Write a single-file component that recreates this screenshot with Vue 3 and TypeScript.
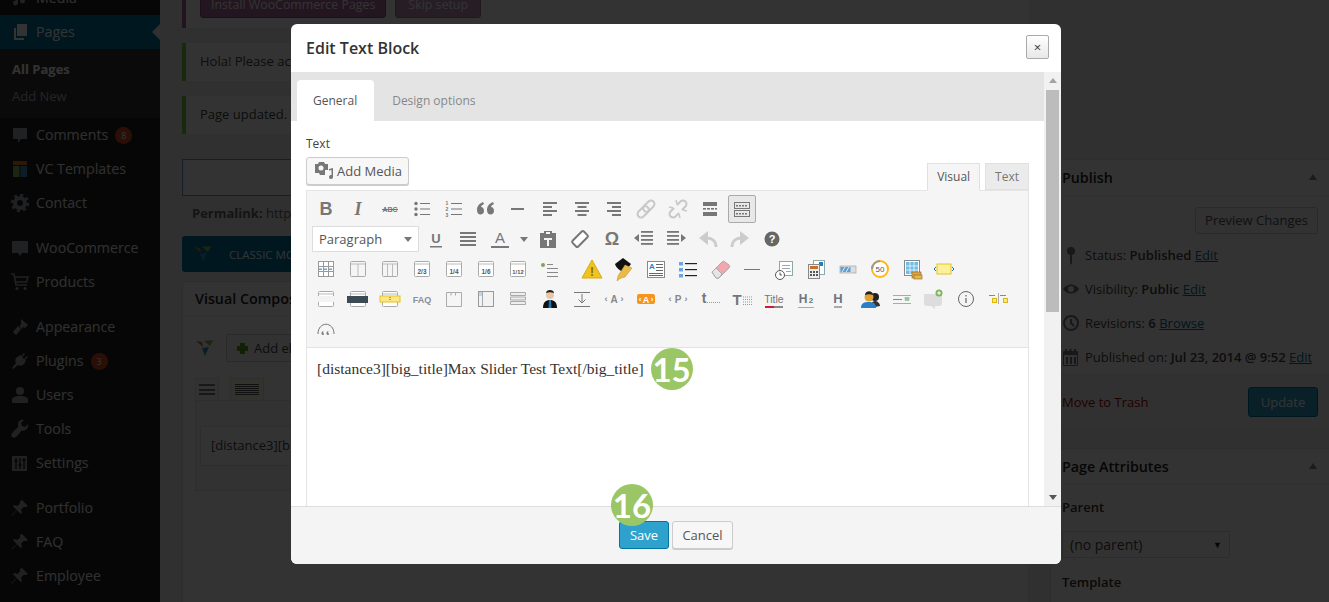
<script setup lang="ts">
const g = "#777";
const font = 'font-family="Liberation Sans, sans-serif"';
const txt = (s: string, size: number, y = 17, extra = "", fill = g, x = 12) =>
  `<text x="${x}" y="${y}" text-anchor="middle" font-size="${size}" ${font} fill="${fill}" ${extra}>${s}</text>`;
const bold = 'font-weight="700"';
const bars = (rows: number[][], c = g, h = 2) =>
  rows.map(([x, y, w]) => `<rect x="${x}" y="${y}" width="${w}" height="${h}" fill="${c}"/>`).join("");
const frame = (inner = "", fill = "#fff") =>
  `<rect x="4.5" y="4.5" width="15" height="15" rx="1" fill="${fill}" stroke="#aaa"/><path d="M5 7h14" stroke="#bbb"/>${inner}`;
const frac = (s: string, size = 6.5) => frame(txt(s, size, 16.5, bold, "#555"));
const line = (d: string, c = "#888", w = 1, extra = "") =>
  `<path d="${d}" fill="none" stroke="${c}" stroke-width="${w}" ${extra}/>`;

const row1 = [
  txt("B", 18, 18, bold),
  `<text x="12" y="18" text-anchor="middle" font-size="18" font-family="Liberation Serif, serif" font-style="italic" font-weight="700" fill="${g}">I</text>`,
  txt("ABC", 7, 15, bold) + bars([[4, 12, 16]], g, 1),
  `<circle cx="6" cy="6.5" r="1.7" fill="${g}"/><circle cx="6" cy="12" r="1.7" fill="${g}"/><circle cx="6" cy="17.5" r="1.7" fill="${g}"/>` +
    bars([[10, 6, 10], [10, 11.5, 10], [10, 17, 10]], g, 1),
  txt("1", 5, 8, bold, g, 5) + txt("2", 5, 14, bold, g, 5) + txt("3", 5, 20, bold, g, 5) +
    bars([[9, 6, 11], [9, 11.5, 11], [9, 17, 11]], g, 1),
  `<path d="M3 13c0-4 2-6 6-8l1 2c-2 1-3 2-3 3 2 0 3 2 3 4s-1.500 3.500-3.500 3.500S3 16 3 13zM13 13c0-4 2-6 6-8l1 2c-2 1-3 2-3 3 2 0 3 2 3 4s-1.500 3.500-3.500 3.500S13 16 13 13z" fill="${g}"/>`,
  bars([[5, 11, 13]]),
  bars([[5, 5, 14], [5, 9, 9], [5, 13, 14], [5, 17, 9]]),
  bars([[5, 5, 14], [7.5, 9, 9], [5, 13, 14], [7.5, 17, 9]]),
  bars([[5, 5, 14], [10, 9, 9], [5, 13, 14], [10, 17, 9]]),
  `<g transform="rotate(-45 12 12)" fill="none" stroke="#c8c8c8" stroke-width="2"><rect x="1.5" y="8.5" width="13" height="7" rx="3.5"/><rect x="9.5" y="8.5" width="13" height="7" rx="3.5"/></g>`,
  `<g transform="rotate(-45 12 12)" fill="none" stroke="#c8c8c8" stroke-width="2"><path d="M10 8.500H5a3.500 3.500 0 0 0 0 7h5"/><path d="M14 8.500h5a3.500 3.500 0 0 1 0 7h-5"/></g>` +
    line("M10 3l1 4M14 21l-1-4M3 10l4 1M21 14l-4-1", "#c8c8c8", 1.5),
  bars([[5, 5, 14]], g, 4) + bars([[5, 11, 3], [9, 11, 3], [13, 11, 3], [17, 11, 2]], g, 1.6) + bars([[5, 15, 14]], g, 4),
  `<rect x="4.5" y="5.5" width="15" height="6" fill="none" stroke="#777"/><rect x="4.5" y="13.5" width="15" height="6" fill="none" stroke="#777"/>` +
    bars([[6, 8, 2], [9, 8, 2], [12, 8, 2], [15, 8, 2], [6, 16, 2], [9, 16, 2], [12, 16, 2], [15, 16, 2]], g, 1.5),
];

const row2 = [
  txt("U", 13, 16, bold) + bars([[6, 19, 12]], g, 1.5),
  bars([[4, 5, 16], [4, 9, 16], [4, 13, 16], [4, 17, 16]]),
  txt("A", 15, 16) + bars([[3, 19, 18]], g, 2),
];
const row2b = [
  `<path d="M4 6h4V4h8v2h4v15H4z" fill="${g}"/><path d="M8 11h8v2h-3v6h-2v-6H8z" fill="#f5f5f5"/><rect x="10" y="5" width="4" height="2" fill="#f5f5f5"/>`,
  `<g transform="rotate(-45 12 12)"><rect x="4" y="8" width="16" height="8" rx="1.500" fill="#fff" stroke="${g}" stroke-width="2"/></g>`,
  txt("Ω", 18, 18, bold),
  `<path d="M2 11l5-4v8z" fill="${g}"/>` + bars([[9, 4, 12], [9, 8, 12], [9, 12, 12], [9, 16, 12]], g, 1.8),
  `<path d="M22 11l-5-4v8z" fill="${g}"/>` + bars([[3, 4, 12], [3, 8, 12], [3, 12, 12], [3, 16, 12]], g, 1.8),
  line("M20 20c0-6-4-9-9-9", "#ccc", 3) + `<path d="M12 4v14L3 11z" fill="#ccc"/>`,
  line("M4 20c0-6 4-9 9-9", "#ccc", 3) + `<path d="M12 4v14l9-7z" fill="#ccc"/>`,
  `<circle cx="12" cy="12" r="7.5" fill="#666"/>` + txt("?", 11, 16, bold, "#fff"),
];

const row3 = [
  `<rect x="4.5" y="4.5" width="15" height="15" fill="#fff" stroke="#999"/>` +
    line("M9.500 4v15M14.500 4v15M4 9.500h15M4 14.500h15", "#999") +
    bars([[5, 11.5, 3], [10, 11.5, 3], [15, 11.5, 3]], "#5aa9e6", 1.5),
  frame(line("M12 7v12", "#bbb"), "#f5f5f5"),
  frame(line("M9.500 7v12M14.500 7v12", "#bbb"), "#f5f5f5"),
  frac("2/3"),
  frac("1/4"),
  frac("1/6"),
  frac("1/12", 5.8),
  `<circle cx="5" cy="8" r="2" fill="#7fa65a"/>` + bars([[9, 7, 6], [9, 11, 11], [9, 15, 11], [9, 19, 11]], "#888", 1),
];
const row3b = [
  `<path d="M12 3l10 18H2z" fill="#f0c420" stroke="#d9a90f"/>` + txt("!", 12, 19, bold, "#8a6d00"),
  `<path d="M3 7l8-6 8 6-6 8c-4 0-9-4-10-8z" fill="#111"/><path d="M13 8l7 3-7 9-4 1-4 3 1-5z" fill="#e9b949" stroke="#c9982f" stroke-width=".6"/>`,
  `<rect x="3.5" y="4.5" width="17" height="16" fill="#fff" stroke="#888"/>` + txt("A", 8, 12, bold, "#2f7fd0", 8) +
    bars([[12, 7, 7], [12, 10, 7], [12, 13, 7], [5, 16, 14], [5, 18, 14]], "#666", 1),
  `<rect x="3" y="5" width="4" height="3.5" fill="#6aa5e0"/><rect x="3" y="11" width="4" height="3.5" fill="#6aa5e0"/><rect x="3" y="17" width="4" height="3.5" fill="#6aa5e0"/>` +
    bars([[9, 6, 12], [9, 12, 12], [9, 18, 12]], "#222", 1.2),
  `<path d="M4 15L14 5c1-1 2-1 3 0l4 3c1 1 1 2 0 3L11 21H8z" fill="#f2a6ae" stroke="#aaa"/><path d="M4 15l4-4 6 6-3 4H8z" fill="#e5e5e5" stroke="#aaa"/>`,
  bars([[4, 12, 16]], "#777", 1),
  `<rect x="7.5" y="4.5" width="13" height="14" fill="#fff" stroke="#8aa"/>` + bars([[10, 8, 8], [10, 11, 8], [14, 14, 5]], "#9ab", 1) +
    `<circle cx="8" cy="18" r="4.5" fill="#fff" stroke="#555"/>` + line("M8 15.500V18h2", "#555"),
  `<rect x="9.5" y="3.5" width="11" height="14" fill="#fff" stroke="#8aa"/><rect x="15" y="5" width="4" height="4" fill="#2d78b8"/><rect x="4.5" y="7.5" width="11" height="14" fill="#eee" stroke="#888"/><rect x="6" y="9" width="8" height="3" fill="#c96f2e"/>` +
    bars([[6, 14, 2], [9, 14, 2], [12, 14, 2], [6, 17, 2], [9, 17, 2], [12, 17, 2]], "#555", 2),
  `<rect x="4" y="9" width="16" height="7" fill="#ddd" stroke="#999" stroke-width=".6"/><rect x="4.5" y="10" width="10" height="5" fill="#5aa0d8"/>` +
    line("M6 15l3-5M10 15l3-5", "#fff", 0.8),
  `<circle cx="12" cy="12" r="8" fill="#fff" stroke="#fdb913" stroke-width="2"/>` + line("M12 4A8 8 0 0 0 4 12", "#999", 2) + txt("50", 8, 15, "", "#555"),
  `<rect x="4.5" y="3.5" width="15" height="15" fill="#fff" stroke="#888"/><rect x="6" y="5" width="12" height="12" fill="#6dbdea"/>` +
    line("M6 9h12M6 13h12M10 5v12M14 5v12", "#fff", 0.7) +
    `<rect x="12" y="15" width="9" height="6" fill="#d9a441" stroke="#8a6a20" stroke-width=".6"/><rect x="14" y="18" width="8" height="4" fill="#e6b451" stroke="#8a6a20" stroke-width=".6"/>`,
  `<rect x="5" y="7" width="14" height="10" fill="#fdf09c" stroke="#e6c619"/><path d="M4 10l-2 2 2 2M20 10l2 2-2 2" fill="none" stroke="#1a6fa8"/>`,
];

const row4 = [
  frame(`<rect x="3" y="9" width="18" height="6" fill="#f3f3f3"/>`),
  frame(`<rect x="1" y="9" width="21" height="7" fill="#3c4a54"/>`),
  frame(`<rect x="2" y="9" width="20" height="6" fill="#fde68a" stroke="#e6c619"/><path d="M12 10v4" stroke="#555" stroke-dasharray="1 1"/>`),
  txt("FAQ", 9, 16, bold, "#8a8f98"),
  `<path d="M4.500 5.500h15v14h-15z" fill="#f5f5f5" stroke="#aaa"/><path d="M9 5.500v3M13.500 5.500v3" stroke="#aaa"/>`,
  `<rect x="4.5" y="4.5" width="15" height="15" fill="#f2f2f2" stroke="#999"/><rect x="5" y="5" width="3" height="4" fill="#b8d8ee"/>` + line("M8.500 5v14", "#aaa"),
  `<path d="M4.500 5.500h15v3h-15zM4.500 10h15v3h-15zM4.500 14.500h15v3h-15z" fill="#eee" stroke="#aaa"/>`,
  `<circle cx="12" cy="8" r="4" fill="#e9c7a5"/><path d="M8 6c0-4 8-4 8 0-3-1-5-1-8 0z" fill="#222"/><path d="M5 21c0-6 3-8 7-8s7 2 7 8z" fill="#111"/><path d="M11 13h2l.5 8h-3z" fill="#1878b8"/>`,
  line("M4 5.500h16M4 19.500h16", "#777") + line("M12 7v9M8.500 12.500L12 16l3.500-3.500", "#777"),
  txt("‹", 9, 15, bold, "#888", 4) + txt("A", 10, 16, bold, "#888") + txt("›", 9, 15, bold, "#888", 20),
  `<rect x="3" y="7" width="18" height="10" rx="2" fill="#f7941d"/>` + txt("‹", 8, 15, bold, "#fff", 6) + txt("A", 9, 15.5, bold, "#fff") + txt("›", 8, 15, bold, "#fff", 18),
  txt("‹", 9, 15, bold, "#888", 4) + txt("P", 10, 16, bold, "#888") + txt("›", 9, 15, bold, "#888", 20),
  txt("t", 14, 16, bold, "#777", 6) + line("M9 15.500h13", "#999", 1, 'stroke-dasharray="1 1"'),
  txt("T", 15, 18, bold, "#777", 7) + line("M13 10h9M13 12.500h9M13 15h9M13 17.500h9", "#999", 1, 'stroke-dasharray="1 1"'),
  txt("Title", 10.5, 16, "", "#777") + `<rect x="3" y="19" width="9" height="2" fill="#d9152f"/><rect x="12" y="19" width="9" height="2" fill="#888"/>`,
  txt("H", 12, 16, bold, "#6f7580", 9) + txt("2", 8, 16, bold, "#6f7580", 17) + bars([[4, 20, 16]], "#aaa", 1),
  txt("H", 13, 16, bold, "#6f7580") + bars([[8, 19, 8]], "#aaa", 2),
  `<circle cx="17" cy="10" r="4" fill="#222"/><path d="M12 21c0-5 3-7 5-7s5 2 5 5z" fill="#333"/><circle cx="11" cy="10" r="4.5" fill="#e0a030"/><path d="M7 8c0-5 8-5 8 0-3-1-5-1-8 0z" fill="#222"/><path d="M3 21c0-5 3-6 8-6s7 2 7 6z" fill="#2b7fc4"/>`,
  bars([[3, 8, 18]], "#aaa", 1) + bars([[3, 12, 9]], "#888", 1) + `<rect x="15" y="10.5" width="4" height="3" fill="#8fd19e" stroke="#6a6" stroke-width=".4"/>` + bars([[3, 16, 18]], "#aaa", 1),
  `<path d="M2 7h15c2 0 3 1 3 3v6c0 2-1 3-3 3h-4v3l-4-3H5c-2 0-3-1-3-3z" fill="#ddd"/><circle cx="17" cy="6" r="3.5" fill="#7fb35f"/><path d="M17 4v4M15 6h4" stroke="#fff"/>`,
  `<circle cx="12" cy="12" r="7.5" fill="none" stroke="#666"/><path d="M12 11v5M12 8v1.500" stroke="#666" stroke-width="1.2"/>`,
  bars([[3, 8, 6], [14, 8, 6]], "#888", 1) + `<rect x="6.5" y="11.5" width="4" height="4" fill="#fde68a" stroke="#d9b70f"/><rect x="17.5" y="11.5" width="4" height="4" fill="#fde68a" stroke="#d9b70f"/><path d="M12.500 6v11" stroke="#aaa"/>`,
];
const row5 = [
  line("M4 17c0-13 16-13 16 0", "#777") +
    `<path d="M9 18c-2 0-2-3 0-4l.5.7c-.5.4-.7.7-.7 1 1.500 0 1.500 2.300.2 2.300zM14 18c-2 0-2-3 0-4l.5.7c-.5.4-.7.7-.7 1 1.500 0 1.500 2.300.2 2.300z" fill="#777"/>`,
];

const c = "#9ea3a8";
const pin = `<path d="M12 2l6 6-2 1h-2.500L11 11.500l1 3.500-1.200 1-3.800-3.800L2 17.500l-.5-.5 5.300-5L3 8.200 4 7l3.500 1L10 5.500V3z" fill="${c}"/>`;
type MenuItem = { label: string; icon: string; badge?: string };
const menuGroups: MenuItem[][] = [
  [
    { label: "Comments", badge: "8", icon: `<path d="M3 3h14v11h-6l-3 4v-4H3z" fill="${c}"/>` },
    { label: "VC Templates", icon: `<rect x="3" y="2" width="14" height="4" fill="#e07b20"/><rect x="3" y="7" width="6.5" height="11" fill="#8cb84a"/><rect x="10.5" y="7" width="6.5" height="11" fill="#3c8fc4"/>` },
    { label: "Contact", icon: `<circle cx="10" cy="10" r="5" fill="none" stroke="${c}" stroke-width="4"/><circle cx="10" cy="10" r="8" fill="none" stroke="${c}" stroke-width="2.5" stroke-dasharray="3 3.28"/>` },
  ],
  [
    { label: "WooCommerce", icon: `<path d="M2 3h16v12h-6l-2 3-2-3H2z" fill="${c}"/>` },
    { label: "Products", icon: `<path d="M1 2h3l2 11h11M5 5h13l-1.500 5H6" fill="none" stroke="${c}" stroke-width="1.5"/><circle cx="7" cy="16.5" r="1.5" fill="${c}"/><circle cx="15" cy="16.5" r="1.5" fill="${c}"/>` },
  ],
  [
    { label: "Appearance", icon: `<path d="M11 2l7 6-3 3-2-1-1 2-3-3 2-1zM8 9l3 3-5 6-3-3z" fill="${c}"/>` },
    { label: "Plugins", badge: "3", icon: `<path d="M14 2l1 1-3 3 2 2 3-3 1 1-3 3 1 1-3 4c-2 1-4 1-5 0l-5 4-1-1 4-5c-1-1-1-3 0-5l4-3 1 1z" fill="${c}"/>` },
    { label: "Users", icon: `<circle cx="10" cy="6" r="4" fill="${c}"/><path d="M2 18v-3c0-3 3-4 8-4s8 1 8 4v3z" fill="${c}"/>` },
    { label: "Tools", icon: `<path d="M18 5l-3 3-3-1-1-3 3-3c-3-1-6 1-6 4 0 1 0 2 .5 2.500L2 14c-1 1-1 3 0 4s3 1 4 0l6-6.500c3 1 7-2 6-6.500z" fill="${c}"/>` },
    { label: "Settings", icon: `<rect x="2" y="3" width="15" height="15" fill="${c}"/><path d="M6 5v11M10 5v11M14 5v11" stroke="#222" stroke-width="1.5"/><path d="M4.500 8h3M8.500 12h3M12.500 7h3" stroke="#222" stroke-width="2"/>` },
  ],
  [
    { label: "Portfolio", icon: pin },
    { label: "FAQ", icon: pin },
    { label: "Employee", icon: pin },
  ],
];

const a = "#777";
const metaIcons = {
  status: `<circle cx="9" cy="6" r="4" fill="${a}"/><path d="M8 9h2v9l-1 2-1-2z" fill="${a}"/>`,
  visibility: `<path d="M1 10c4-6 12-6 16 0-4 6-12 6-16 0z" fill="${a}"/><circle cx="9" cy="10" r="3" fill="#fff"/>`,
  revisions: `<circle cx="9" cy="10" r="7" fill="none" stroke="${a}" stroke-width="2"/><path d="M9 6v4l3 3" fill="none" stroke="${a}" stroke-width="2"/>`,
  calendar: `<path d="M1.500 4.500h14v14h-14z" fill="none" stroke="${a}"/><path d="M2 4h13v4H2zM4 10h2v7H4zM8 10h2v7H8zM12 10h2v7h-2z" fill="${a}"/><path d="M4 2v3M8.500 2v3M13 2v3" stroke="${a}" stroke-width="2"/>`,
};
</script>

<template>
  <div class="page">
    <div class="scrolled">
      <aside class="sidebar">
        <div class="menu-item media">
          <svg class="menu-icon" viewBox="0 0 20 20"><path d="M6 4l9-2v11a2.500 2.500 0 1 1-2-2.400V5L8 6v9a2.500 2.500 0 1 1-2-2.400z" fill="#9ea3a8" /></svg>
          <span>Media</span>
        </div>
        <div class="menu-item current">
          <svg class="menu-icon" viewBox="0 0 20 20"><path d="M7 2h10v12H7z" fill="#fff" /><path d="M4 6v12h10v-2H6V6z" fill="#fff" /></svg>
          <span>Pages</span>
        </div>
        <div class="submenu">
          <div class="sub strong">All Pages</div>
          <div class="sub">Add New</div>
        </div>
        <div v-for="(group, i) in menuGroups" :key="i" class="menu-group">
          <div v-for="item in group" :key="item.label" class="menu-item">
            <svg class="menu-icon" viewBox="0 0 20 20" v-html="item.icon"></svg>
            <span>{{ item.label }}</span>
            <b v-if="item.badge" class="badge">{{ item.badge }}</b>
          </div>
        </div>
      </aside>

      <main class="main">
        <section class="content">
          <div class="notice purple">
            <button class="woo-btn">Install WooCommerce Pages</button>
            <button class="woo-btn faint">Skip setup</button>
          </div>
          <div class="notice">Hola! Please act</div>
          <div class="notice">Page updated. V</div>
          <div class="title-input"></div>
          <div class="permalink"><b>Permalink:</b> http://</div>
          <div class="classic">
            <svg width="20" height="20" viewBox="0 0 20 20"><path d="M1 3l6 1 1 5z" fill="#c77a2a" /><path d="M9 3l9-1-3 6z" fill="#8cb84a" /><path d="M7 10l7-1-4 9z" fill="#2f94c4" /></svg>
            <span>CLASSIC MODE</span>
          </div>
          <div class="vc-box">
            <h3 class="box-title">Visual Composer</h3>
            <div class="vc-inner">
              <div class="vc-tools">
                <svg width="20" height="20" viewBox="0 0 20 20"><path d="M1 3l6 1 1 5z" fill="#c77a2a" /><path d="M9 3l9-1-3 6z" fill="#8cb84a" /><path d="M7 10l7-1-4 9z" fill="#2f94c4" /></svg>
                <div class="add-element"><i class="plus"></i>Add element</div>
              </div>
              <div class="vc-tabs">
                <span class="vc-tab"><i class="lines"></i></span>
                <span class="vc-tab yellow"><i class="lines dense"></i></span>
              </div>
              <div class="vc-row">
                <div class="vc-card">[distance3][big_title]Max Slider Test Text[/big_title]</div>
              </div>
            </div>
          </div>
        </section>

        <section class="side">
          <div class="side-box">
            <h3 class="box-title">Publish<i class="caret"></i></h3>
            <div class="preview-row"><span class="btn">Preview Changes</span></div>
            <div class="meta"><svg viewBox="0 0 18 20" v-html="metaIcons.status"></svg><span>Status: <b>Published</b> <u>Edit</u></span></div>
            <div class="meta"><svg viewBox="0 0 18 20" v-html="metaIcons.visibility"></svg><span>Visibility: <b>Public</b> <u>Edit</u></span></div>
            <div class="meta"><svg viewBox="0 0 18 20" v-html="metaIcons.revisions"></svg><span>Revisions: <b>6</b> <u>Browse</u></span></div>
            <div class="meta"><svg viewBox="0 0 18 20" v-html="metaIcons.calendar"></svg><span>Published on: <b>Jul 23, 2014 @ 9:52</b> <u>Edit</u></span></div>
            <div class="actions">
              <span class="trash">Move to Trash</span>
              <span class="update">Update</span>
            </div>
          </div>
          <div class="side-box attrs">
            <h3 class="box-title">Page Attributes<i class="caret"></i></h3>
            <div class="attr-label first">Parent</div>
            <div class="parent-select">(no parent)<i>▼</i></div>
            <div class="attr-label">Template</div>
          </div>
        </section>
      </main>
    </div>

    <div class="overlay">
      <div class="modal">
        <header class="modal-head">
          <h2>Edit Text Block</h2>
          <button class="close">×</button>
        </header>

        <div class="modal-body">
          <div class="scroll-area">
            <nav class="tabs">
              <span class="tab active">General</span>
              <span class="tab">Design options</span>
            </nav>
            <div class="form">
              <div class="field-label">Text</div>
              <div class="editor-top">
                <button class="add-media">
                  <svg width="20" height="20" viewBox="0 0 20 20"><path d="M1 3h3l1-2h5l1 2h3v6h-3v5H6l-1-2H1z" fill="#777" /><circle cx="7" cy="7" r="2.5" fill="#f7f7f7" /><path d="M15 8l4-1v9a2 2 0 1 1-1.500-1.900V9l-2.500.6z" fill="#777" /></svg>
                  Add Media
                </button>
                <div class="mode-tabs">
                  <span class="mode active">Visual</span>
                  <span class="mode">Text</span>
                </div>
              </div>
              <div class="editor">
                <div class="toolbar">
                  <div class="tb-row">
                    <span v-for="(svg, i) in row1" :key="i" class="tb-btn" :class="{ pressed: i === row1.length - 1 }">
                      <svg viewBox="0 0 24 24" v-html="svg"></svg>
                    </span>
                  </div>
                  <div class="tb-row">
                    <div class="format-select">Paragraph<i></i></div>
                    <span v-for="(svg, i) in row2" :key="i" class="tb-btn"><svg viewBox="0 0 24 24" v-html="svg"></svg></span>
                    <i class="split-arrow"></i>
                    <span v-for="(svg, i) in row2b" :key="i" class="tb-btn"><svg viewBox="0 0 24 24" v-html="svg"></svg></span>
                  </div>
                  <div class="tb-row">
                    <span v-for="(svg, i) in row3" :key="i" class="tb-btn"><svg viewBox="0 0 24 24" v-html="svg"></svg></span>
                    <span class="tb-gap"></span>
                    <span v-for="(svg, i) in row3b" :key="i" class="tb-btn"><svg viewBox="0 0 24 24" v-html="svg"></svg></span>
                  </div>
                  <div class="tb-row">
                    <span v-for="(svg, i) in row4" :key="i" class="tb-btn"><svg viewBox="0 0 24 24" v-html="svg"></svg></span>
                  </div>
                  <div class="tb-row">
                    <span v-for="(svg, i) in row5" :key="i" class="tb-btn"><svg viewBox="0 0 24 24" v-html="svg"></svg></span>
                  </div>
                </div>
                <div class="editor-text">
                  <span>[distance3][big_title]Max Slider Test Text[/big_title]</span>
                  <span class="step">15</span>
                </div>
              </div>
            </div>
          </div>
          <div class="scrollbar">
            <i class="arrow up"></i>
            <div class="thumb"></div>
            <i class="arrow down"></i>
          </div>
        </div>

        <footer class="modal-foot">
          <span class="step step-save">16</span>
          <button class="save">Save</button>
          <button class="cancel">Cancel</button>
        </footer>
      </div>
    </div>
  </div>
</template>

<style>
html,
body {
  margin: 0;
  overflow: hidden;
}
</style>

<style scoped>
.page {
  position: relative;
  width: 1329px;
  height: 602px;
  overflow: hidden;
  background: #f1f1f1;
  font-family: "Open Sans", sans-serif;
  font-size: 13px;
  color: #444;
}

.scrolled {
  display: flex;
  margin-top: -19px;
  height: 700px;
}

.sidebar {
  flex: none;
  width: 160px;
  background: #222;
  color: #eee;
  font-size: 14.2px;
}

.menu-item {
  position: relative;
  display: flex;
  align-items: center;
  height: 34px;
  color: #eee;
}

.menu-item span {
  margin-top: -2px;
}

.menu-group {
  margin-bottom: 11px;
}

.menu-icon {
  width: 20px;
  height: 20px;
  margin: 0 6px 0 10px;
  flex: none;
}

.current {
  background: #0074a2;
  color: #fff;
}

.current::after {
  content: "";
  position: absolute;
  right: 0;
  top: 9px;
  border: 8px solid transparent;
  border-right-color: #f1f1f1;
}

.submenu {
  box-sizing: border-box;
  height: 69px;
  padding-top: 7px;
  background: #333;
}

.sub {
  height: 27px;
  line-height: 27px;
  padding-left: 12px;
  font-size: 13px;
  color: #b4b9be;
}

.sub.strong {
  color: #fff;
  font-weight: 700;
}

.badge {
  margin-left: 7px;
  width: 17px;
  height: 17px;
  border-radius: 50%;
  background: #d54e21;
  color: #fff;
  font-size: 9px;
  font-weight: 400;
  line-height: 17px;
  text-align: center;
}

.main {
  flex: 1;
  display: flex;
  gap: 21px;
  padding-left: 22px;
  min-width: 0;
}

.content {
  flex: none;
  width: 847px;
}

.notice {
  box-sizing: border-box;
  height: 38px;
  margin-bottom: 15px;
  padding-left: 14px;
  border-left: 4px solid #7ad03a;
  background: #fff;
  line-height: 36px;
  font-size: 13px;
  white-space: nowrap;
}

.notice.purple {
  display: flex;
  gap: 9px;
  height: 47px;
  padding-top: 9px;
  border-left-color: #a46497;
}

.woo-btn {
  height: 28px;
  border: 1px solid #8a4f7d;
  border-radius: 3px;
  background: #ad6ea0;
  color: #fff;
  font: 12.4px "Open Sans", sans-serif;
  padding: 0 10px;
}

.woo-btn.faint {
  padding: 0 12px;
  opacity: 0.75;
}

.title-input {
  box-sizing: border-box;
  height: 37px;
  margin-top: 25px;
  border: 1px solid #5b9dd9;
  background: #fff;
}

.permalink {
  height: 20px;
  margin: 7px 0 13px 10px;
  line-height: 20px;
  font-size: 13px;
  color: #666;
}

.classic {
  display: flex;
  align-items: center;
  gap: 16px;
  height: 36px;
  padding-left: 11px;
  border-radius: 3px;
  background: #0074a2;
  color: #fff;
  font-size: 11.5px;
}

.vc-box {
  margin-top: 9px;
  height: 320px;
  background: #fff;
  border: 1px solid #e5e5e5;
}

.box-title {
  position: relative;
  margin: 0;
  height: 35px;
  box-sizing: border-box;
  padding: 7px 12px 0;
  border-bottom: 1px solid #eee;
  font-size: 14.3px;
  font-weight: 600;
  line-height: 20px;
  color: #222;
}

.vc-inner {
  padding: 17px 12px 0;
}

.vc-tools {
  display: flex;
  align-items: center;
  gap: 11px;
}

.add-element {
  display: flex;
  align-items: center;
  gap: 6px;
  box-sizing: border-box;
  height: 28px;
  padding: 0 10px;
  border: 1px solid #ccc;
  border-radius: 3px;
  background: #f7f7f7;
  font-size: 13px;
}

.plus {
  width: 11px;
  height: 11px;
  background:
    linear-gradient(#5a9e1e, #5a9e1e) center / 11px 5px no-repeat,
    linear-gradient(#5a9e1e, #5a9e1e) center / 5px 11px no-repeat;
}

.vc-tabs {
  display: flex;
  gap: 11px;
  margin-top: 16px;
  height: 22px;
}

.vc-tab {
  display: flex;
  align-items: center;
  justify-content: center;
  box-sizing: border-box;
  width: 24px;
  border: 1px solid #e5e5e5;
  border-bottom: 0;
  background: #f7f7f7;
}

.vc-tab.yellow {
  width: 34px;
  background: #fdf8e0;
}

.lines {
  display: block;
  width: 16px;
  height: 11px;
  background: repeating-linear-gradient(#777 0 2px, transparent 2px 4.5px);
}

.lines.dense {
  width: 24px;
  background: repeating-linear-gradient(#555 0 1px, transparent 1px 2px);
}

.vc-row {
  height: 91px;
  box-sizing: border-box;
  padding: 25px 4px;
  border: 1px solid #e5e5e5;
  background: #f7f7f7;
}

.vc-card {
  box-sizing: border-box;
  height: 40px;
  padding-left: 10px;
  border: 1px solid #e5e5e5;
  background: #fff;
  line-height: 36px;
  font-size: 13px;
}

.side {
  flex: none;
  width: 280px;
  padding-top: 178px;
}

.side-box {
  box-sizing: border-box;
  height: 266px;
  background: #fff;
  border: 1px solid #e5e5e5;
  font-size: 13px;
  color: #444;
}

.side-box .box-title {
  height: 36px;
  padding: 8px 12px 0 11px;
}

.caret {
  position: absolute;
  right: 12px;
  top: 14px;
  border: 4px solid transparent;
  border-top: 0;
  border-bottom: 6px solid #888;
}

.preview-row {
  display: flex;
  justify-content: flex-end;
  padding: 11px 11px 0 0;
  height: 42px;
  box-sizing: border-box;
}

.btn {
  box-sizing: border-box;
  width: 123px;
  height: 27px;
  border: 1px solid #ccc;
  border-radius: 3px;
  background: #f7f7f7;
  text-align: center;
  line-height: 25px;
  color: #555;
}

.meta {
  display: flex;
  align-items: center;
  gap: 5px;
  height: 34px;
  padding-left: 11px;
  white-space: pre;
}

.meta svg {
  width: 18px;
  height: 20px;
  flex: none;
}

.meta b {
  font-weight: 600;
}

.meta u {
  color: #0074a2;
}

.actions {
  display: flex;
  justify-content: space-between;
  align-items: center;
  box-sizing: border-box;
  height: 52px;
  padding: 2px 11px 0;
  border-top: 1px solid #eee;
  background: #f5f5f5;
}

.trash {
  color: #a00;
}

.update {
  box-sizing: border-box;
  width: 70px;
  height: 30px;
  border: 1px solid #0074a2;
  border-radius: 3px;
  background: #2ea2cc;
  color: #fff;
  text-align: center;
  line-height: 28px;
}

.attrs {
  margin-top: 23px;
  height: 200px;
}

.attr-label {
  padding: 0 0 0 11px;
  margin-top: 14px;
  font-weight: 600;
  line-height: 20px;
  color: #333;
}

.attr-label.first {
  margin-top: 12px;
}

.parent-select {
  display: flex;
  justify-content: space-between;
  align-items: center;
  box-sizing: border-box;
  width: 168px;
  height: 27px;
  margin: 14px 0 0 11px;
  padding: 0 7px;
  border: 1px solid #ddd;
  font-size: 14px;
}

.parent-select i {
  font-size: 9px;
  font-style: normal;
  color: #222;
}

/* modal */
.overlay {
  position: absolute;
  inset: 0;
  box-sizing: border-box;
  padding: 24px 0 0 291px;
  background: rgba(0, 0, 0, 0.8);
}

.modal {
  display: flex;
  flex-direction: column;
  width: 770px;
  height: 540px;
  border-radius: 6px;
  overflow: hidden;
  background: #fff;
}

.modal-head {
  flex: none;
  display: flex;
  align-items: center;
  justify-content: space-between;
  box-sizing: border-box;
  height: 48px;
  padding: 0 12px 0 15px;
}

.modal-head h2 {
  margin: 0;
  font-size: 16px;
  font-weight: 600;
  color: #333;
}

.close {
  width: 23px;
  height: 24px;
  margin-top: -2px;
  padding: 0;
  border: 1px solid #aaa;
  border-radius: 2px;
  background: linear-gradient(#fff, #e8e8e8);
  font: 13px "Open Sans", sans-serif;
  color: #333;
}

.modal-body {
  flex: 1;
  display: flex;
  min-height: 0;
}

.scroll-area {
  flex: 1;
  min-width: 0;
  overflow: hidden;
}

.tabs {
  display: flex;
  box-sizing: border-box;
  height: 49px;
  padding: 8px 0 0 6px;
  background: #e4e4e4;
}

.tab {
  box-sizing: border-box;
  padding: 0 17px 0 16px;
  border-radius: 4px 4px 0 0;
  font-size: 12px;
  line-height: 41px;
  color: #888;
}

.tab + .tab {
  margin-left: 2px;
}

.tab.active {
  background: #fff;
  color: #555;
}

.form {
  padding: 13px 15px 0;
}

.field-label {
  margin-bottom: 3px;
  font-size: 12px;
  line-height: 20px;
  color: #444;
}

.editor-top {
  display: flex;
  justify-content: space-between;
  align-items: flex-end;
  height: 33px;
}

.add-media {
  display: flex;
  align-items: center;
  gap: 3px;
  box-sizing: border-box;
  align-self: flex-start;
  width: 103px;
  height: 28px;
  padding: 0 0 0 7px;
  border: 1px solid #ccc;
  border-radius: 3px;
  background: #f7f7f7;
  box-shadow: 0 1px 0 #ccc;
  font: 13px "Open Sans", sans-serif;
  color: #555;
}

.mode-tabs {
  display: flex;
  gap: 5px;
  margin-bottom: -1px;
}

.mode {
  box-sizing: border-box;
  height: 27px;
  padding: 0 9px;
  border: 1px solid #e0e0e0;
  background: #ebebeb;
  font-size: 12px;
  line-height: 26px;
  color: #777;
}

.mode.active {
  height: 28px;
  background: #f5f5f5;
  border-bottom-color: #f5f5f5;
  color: #555;
}

.editor {
  box-sizing: border-box;
  width: 723px;
  height: 400px;
  border: 1px solid #e5e5e5;
  background: #fff;
}

.toolbar {
  box-sizing: border-box;
  height: 157px;
  padding: 3px 0 0 3px;
  background: #f5f5f5;
  border-bottom: 1px solid #e2e2e2;
}

.tb-row {
  display: flex;
  align-items: center;
  height: 30px;
}

.tb-btn {
  flex: none;
  display: flex;
  align-items: center;
  justify-content: center;
  box-sizing: border-box;
  width: 32px;
  height: 28px;
}

.tb-btn svg {
  width: 24px;
  height: 24px;
}

.tb-btn.pressed {
  width: 28px;
  margin-left: 2px;
  border: 1px solid #aaa;
  border-radius: 2px;
  background: #e8e8e8;
}

.tb-gap {
  flex: none;
  width: 10px;
}

.format-select {
  flex: none;
  display: flex;
  align-items: center;
  justify-content: space-between;
  box-sizing: border-box;
  width: 107px;
  height: 26px;
  margin: 0 1px 0 2px;
  padding: 0 6px;
  border: 1px solid #ddd;
  background: #fff;
  font-size: 13px;
  color: #555;
}

.format-select i,
.split-arrow {
  border: 4px solid transparent;
  border-bottom: 0;
  border-top: 5px solid #777;
}

.split-arrow {
  flex: none;
  margin: 0 4px;
}

.editor-text {
  display: flex;
  align-items: center;
  gap: 7px;
  padding: 0 10px;
  height: 42px;
  font-family: "Liberation Serif", serif;
  font-size: 15.5px;
  color: #333;
}

.step {
  flex: none;
  width: 42px;
  height: 42px;
  border-radius: 50%;
  background: #9bc665;
  color: #fff;
  font-family: Lato, sans-serif;
  font-size: 33px;
  font-weight: 700;
  line-height: 42px;
  text-align: center;
}

.scrollbar {
  flex: none;
  display: flex;
  flex-direction: column;
  align-items: center;
  box-sizing: border-box;
  width: 17px;
  padding: 6px 0;
  background: #f1f1f1;
}

.arrow {
  flex: none;
  border: 4px solid transparent;
}

.arrow.up {
  border-top: 0;
  border-bottom: 5px solid #a3a3a3;
}

.arrow.down {
  margin-top: auto;
  border-bottom: 0;
  border-top: 5px solid #555;
}

.thumb {
  width: 13px;
  height: 222px;
  margin-top: 7px;
  background: #bcbcbc;
}

.modal-foot {
  position: relative;
  flex: none;
  display: flex;
  justify-content: center;
  gap: 3px;
  box-sizing: border-box;
  height: 58px;
  padding: 14px 0 0;
  border-top: 1px solid #ddd;
  background: #f4f4f4;
}

.modal-foot button {
  box-sizing: border-box;
  height: 28px;
  padding: 0;
  border-radius: 3px;
  font: 13px "Open Sans", sans-serif;
}

.save {
  width: 50px;
  border: 1px solid #0074a2;
  background: #2ea2cc;
  color: #fff;
}

.cancel {
  width: 61px;
  border: 1px solid #ccc;
  background: #f7f7f7;
  color: #555;
  box-shadow: 0 1px 0 #ccc;
}

.step-save {
  position: absolute;
  left: 320px;
  top: -23px;
}
</style>
